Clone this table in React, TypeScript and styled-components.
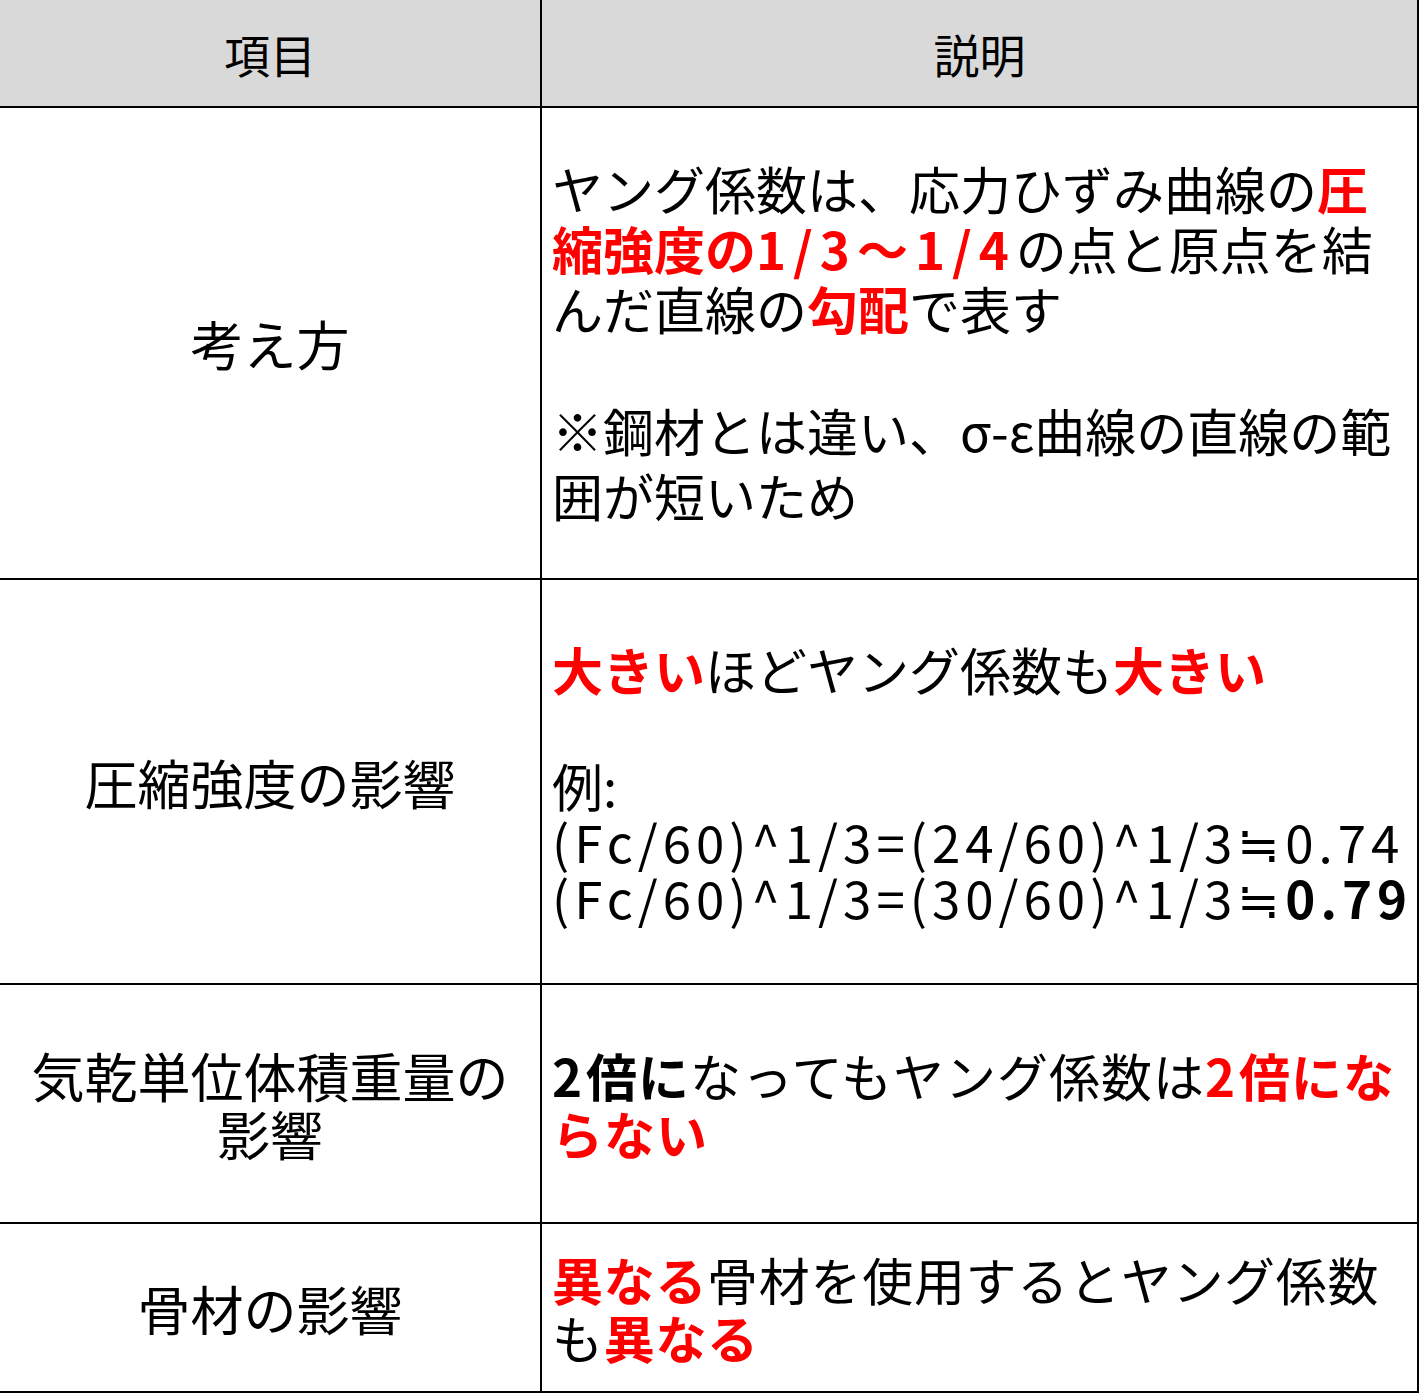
import React from "react";
import styled, { createGlobalStyle } from "styled-components";

const Global = createGlobalStyle`
  html, body { margin: 0; padding: 0; background: #ffffff; }
  body { font-family: "Noto Sans CJK JP", "Noto Sans", sans-serif; color: #000; }
`;

const Table = styled.table`
  width: 1419px;
  border-collapse: collapse;
  table-layout: fixed;
  font-family: "Noto Sans CJK JP", "Noto Sans", sans-serif;
`;

const HeadCell = styled.th<{ $w?: number }>`
  width: ${(p) => (p.$w ? `${p.$w}px` : "auto")};
  height: 106px;
  background: #d9d9d9;
  font-size: 46px;
  font-weight: 400;
  text-align: center;
  vertical-align: middle;
  border-bottom: 2px solid #000;
  border-right: 2px solid #000;
  padding: 0;
`;

const Row = styled.tr<{ $h: number }>`
  height: ${(p) => p.$h}px;
`;

const LabelCell = styled.td`
  font-size: 53px;
  line-height: 58px;
  text-align: center;
  vertical-align: middle;
  border-bottom: 2px solid #000;
  border-right: 2px solid #000;
  padding: 0 6px;
`;

const DescCell = styled.td`
  font-size: 51px;
  line-height: 60px;
  text-align: left;
  vertical-align: middle;
  border-bottom: 2px solid #000;
  border-right: 2px solid #000;
  padding: 0 0 0 10px;
  white-space: nowrap;
`;

const Para = styled.div<{ $gap?: number; $lh?: number; $ls?: number }>`
  margin-top: ${(p) => p.$gap ?? 0}px;
  ${(p) => (p.$lh ? `line-height: ${p.$lh}px;` : "")}
  ${(p) => (p.$ls ? `letter-spacing: ${p.$ls}px;` : "")}
`;

const Red = styled.span`
  color: #ff0000;
  font-weight: 700;
`;

const Bold = styled.span`
  font-weight: 700;
`;

const Num = styled.span<{ $ls?: number }>`
  letter-spacing: ${(p) => p.$ls ?? 5}px;
`;

export default function App() {
  return (
    <>
      <Global />
      <Table>
        <thead>
          <tr>
            <HeadCell $w={540}>項目</HeadCell>
            <HeadCell>説明</HeadCell>
          </tr>
        </thead>
        <tbody>
          <Row $h={472}>
            <LabelCell>考え方</LabelCell>
            <DescCell>
              <Para>
                ヤング係数は、応力ひずみ曲線の<Red>圧</Red>
                <br />
                <Red>
                  縮強度の<Num $ls={7}>1/3～1/4</Num>
                </Red>
                の点と原点を結
                <br />
                んだ直線の<Red>勾配</Red>で表す
              </Para>
              <Para $gap={60} $lh={65}>
                ※鋼材とは違い、σ-ε曲線の直線の範
                <br />
                囲が短いため
              </Para>
            </DescCell>
          </Row>
          <Row $h={405}>
            <LabelCell>圧縮強度の影響</LabelCell>
            <DescCell>
              <Para>
                <Red>大きい</Red>ほどヤング係数も<Red>大きい</Red>
              </Para>
              <Para $gap={58} $lh={56}>
                例:
                <br />
                <Num $ls={5}>(Fc/60)^1/3=(24/60)^1/3≒0.74</Num>
                <br />
                <Num $ls={5}>
                  (Fc/60)^1/3=(30/60)^1/3≒<Bold>0.79</Bold>
                </Num>
              </Para>
            </DescCell>
          </Row>
          <Row $h={239}>
            <LabelCell>
              気乾単位体積重量の
              <br />
              影響
            </LabelCell>
            <DescCell>
              <Para $lh={58} $ls={1}>
                <Bold>
                  <Num $ls={4}>2</Num>倍に
                </Bold>
                なってもヤング係数は
                <Red>
                  <Num $ls={4}>2</Num>倍にな
                </Red>
                <br />
                <Red>らない</Red>
              </Para>
            </DescCell>
          </Row>
          <Row $h={169}>
            <LabelCell>骨材の影響</LabelCell>
            <DescCell>
              <Para $lh={58} $ls={0.7}>
                <Red>異なる</Red>骨材を使用するとヤング係数
                <br />
                も<Red>異なる</Red>
              </Para>
            </DescCell>
          </Row>
        </tbody>
      </Table>
    </>
  );
}
